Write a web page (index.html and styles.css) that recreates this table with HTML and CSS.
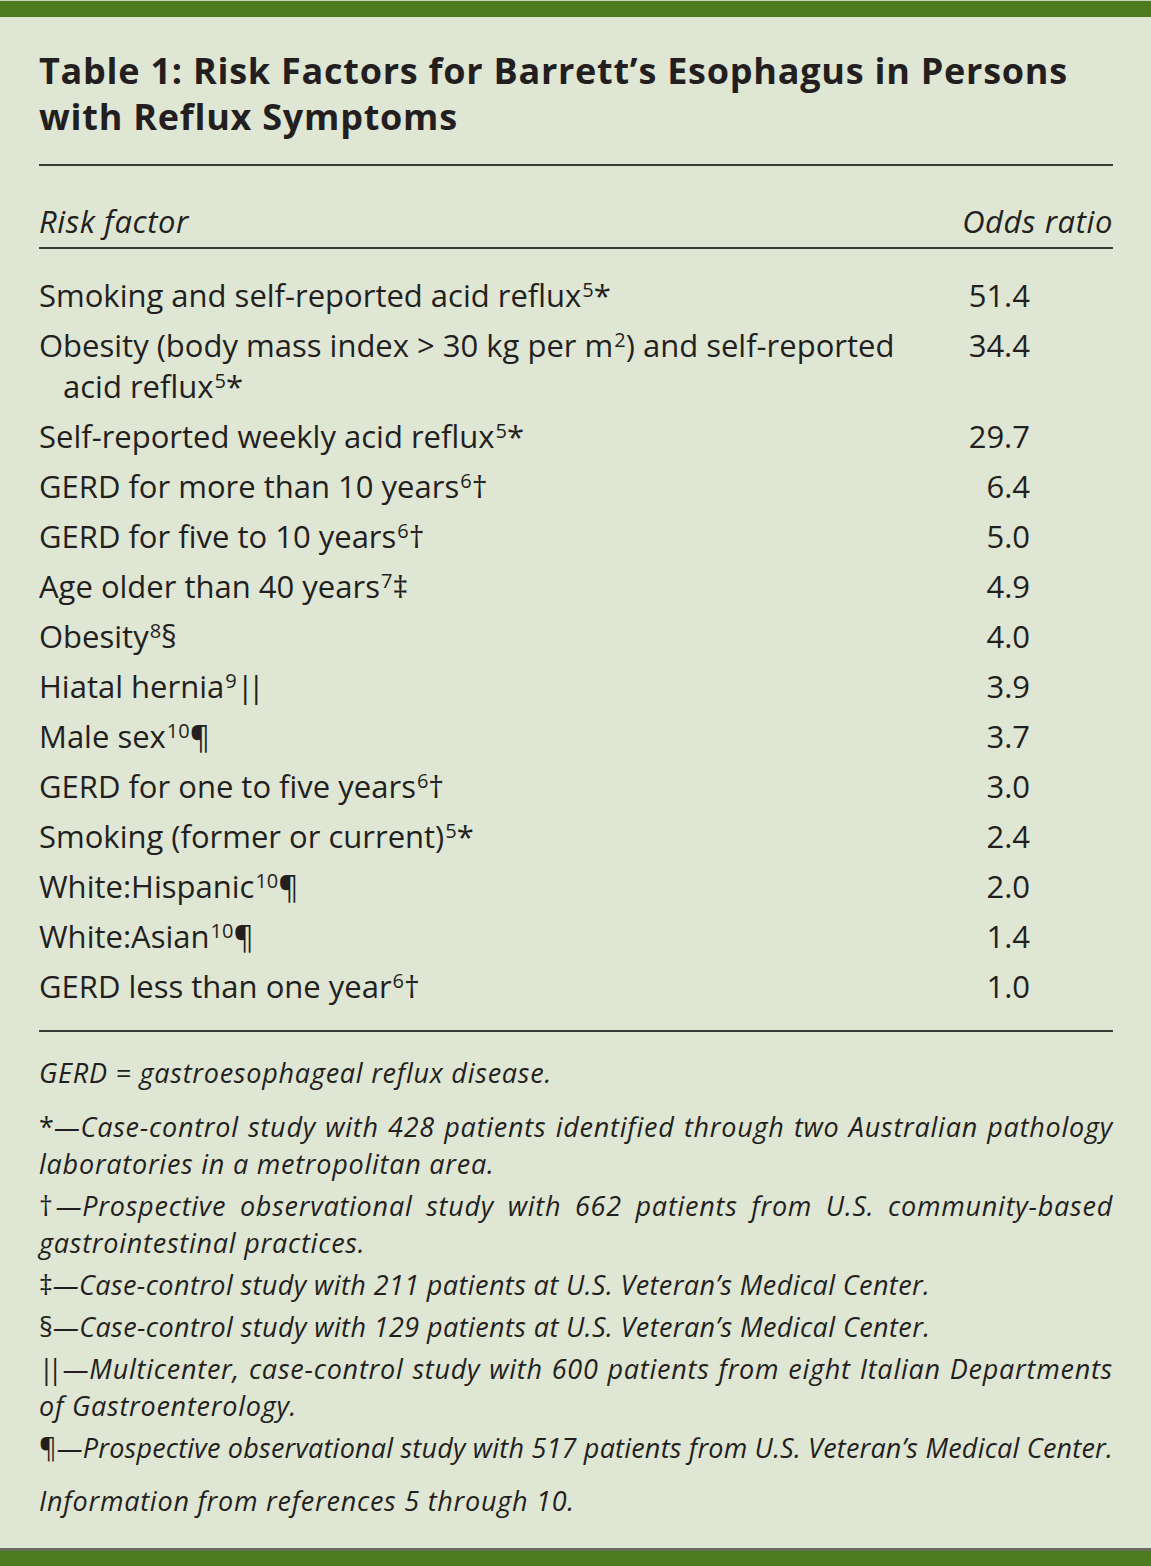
FILE: index.html
```html
<!DOCTYPE html>
<html lang="en">
<head>
<meta charset="utf-8">
<title>Table 1: Risk Factors for Barrett's Esophagus</title>
<link rel="stylesheet" href="styles.css">
</head>
<body>
<div class="bar-top"></div>
<main class="panel">
  <h1 class="title">Table 1: Risk Factors for Barrett’s Esophagus in Persons<br>with Reflux Symptoms</h1>
  <div class="table">
    <div class="head">
      <div class="c1">Risk factor</div>
      <div class="c2">Odds ratio</div>
    </div>
    <div class="body">
      <div class="row"><div class="c1">Smoking and self-reported acid reflux<sup>5</sup>*</div><div class="c2">51.4</div></div>
      <div class="row"><div class="c1">Obesity (body mass index &gt; 30 kg per m<sup>2</sup>) and self-reported<br>acid reflux<sup>5</sup>*</div><div class="c2">34.4</div></div>
      <div class="row"><div class="c1">Self-reported weekly acid reflux<sup>5</sup>*</div><div class="c2">29.7</div></div>
      <div class="row"><div class="c1">GERD for more than 10 years<sup>6</sup>†</div><div class="c2">6.4</div></div>
      <div class="row"><div class="c1">GERD for five to 10 years<sup>6</sup>†</div><div class="c2">5.0</div></div>
      <div class="row"><div class="c1">Age older than 40 years<sup>7</sup>‡</div><div class="c2">4.9</div></div>
      <div class="row"><div class="c1">Obesity<sup>8</sup>§</div><div class="c2">4.0</div></div>
      <div class="row"><div class="c1">Hiatal hernia<sup>9</sup><span class="dbar">||</span></div><div class="c2">3.9</div></div>
      <div class="row"><div class="c1">Male sex<sup>10</sup>¶</div><div class="c2">3.7</div></div>
      <div class="row"><div class="c1">GERD for one to five years<sup>6</sup>†</div><div class="c2">3.0</div></div>
      <div class="row"><div class="c1">Smoking (former or current)<sup>5</sup>*</div><div class="c2">2.4</div></div>
      <div class="row"><div class="c1">White:Hispanic<sup>10</sup>¶</div><div class="c2">2.0</div></div>
      <div class="row"><div class="c1">White:Asian<sup>10</sup>¶</div><div class="c2">1.4</div></div>
      <div class="row"><div class="c1">GERD less than one year<sup>6</sup>†</div><div class="c2">1.0</div></div>
    </div>
  </div>
  <div class="notes">
    <p class="note first">GERD = gastroesophageal reflux disease.</p>
    <div class="group">
      <p class="note"><span class="jl"><span class="up">*</span>—Case-control study with 428 patients identified through two Australian pathology</span>laboratories in a metropolitan area.</p>
      <p class="note"><span class="jl"><span class="up dag">†</span>—Prospective observational study with 662 patients from U.S. community-based</span>gastrointestinal practices.</p>
      <p class="note narrow"><span class="up">‡</span>—Case-control study with 211 patients at U.S. Veteran’s Medical Center.</p>
      <p class="note narrow"><span class="up">§</span>—Case-control study with 129 patients at U.S. Veteran’s Medical Center.</p>
      <p class="note"><span class="jl"><span class="up dbar">||</span>—Multicenter, case-control study with 600 patients from eight Italian Departments</span>of Gastroenterology.</p>
      <p class="note tight"><span class="up">¶</span>—Prospective observational study with 517 patients from U.S. Veteran’s Medical Center.</p>
    </div>
    <p class="note last">Information from references 5 through 10.</p>
  </div>
</main>
<div class="bar-bottom"></div>
</body>
</html>
```

FILE: styles.css
```css
html, body {
  margin: 0;
  padding: 0;
}
body {
  width: 1151px;
  min-height: 1566px;
  background: #dfe6d4;
  color: #231f20;
  font-family: "Open Sans", "Noto Sans", sans-serif;
  display: flex;
  flex-direction: column;
}
.bar-top {
  height: 17px;
  background: #4e7a1f;
  border-top: 1px solid #c9d3b8;
  box-sizing: border-box;
}
.bar-bottom {
  height: 18px;
  background: #4e7a1f;
  border-top: 3px solid #6b6c60;
  box-sizing: border-box;
  margin-top: auto;
}
.panel {
  padding: 31px 38px 0 39px;
  display: flex;
  flex-direction: column;
}
.title {
  margin: 0;
  font-size: 36px;
  line-height: 46px;
  font-weight: 700;
  letter-spacing: 0.75px;
  padding-bottom: 24px;
  border-bottom: 2px solid #3a3a36;
  white-space: nowrap;
}
.table {
  font-size: 31px;
}
.head {
  display: flex;
  justify-content: space-between;
  font-style: italic;
  font-size: 31px;
  letter-spacing: 0.6px;
  line-height: 40px;
  padding: 35px 0 6px;
  border-bottom: 2px solid #3a3a36;
}
.body {
  padding: 21px 0 19px;
  border-bottom: 2px solid #3a3a36;
}
.row {
  display: grid;
  grid-template-columns: 1fr 150px;
  line-height: 41px;
  padding: 4.5px 0;
}
.row .c1 {
  padding-left: 24px;
  text-indent: -24px;
}
.row .c2 {
  text-align: right;
  padding-right: 83px;
}
sup {
  font-size: 20px;
  line-height: 0;
  vertical-align: 0.5em;
  margin-left: 1px;
}
.dbar {
  letter-spacing: -6px;
  margin-right: 6px;
}
.notes {
  font-style: italic;
  font-size: 27px;
  letter-spacing: 0.75px;
  line-height: 37px;
  padding-top: 22px;
}
.note {
  margin: 0;
}
.note.first {
  margin-bottom: 17px;
}
.group {
  display: flex;
  flex-direction: column;
  gap: 5px;
}
.note.last {
  margin-top: 16px;
}
.note.narrow {
  letter-spacing: 0.4px;
}
.up {
  font-style: normal;
  letter-spacing: 0;
}
.up.dag {
  margin-right: -3px;
}
.up.dbar {
  letter-spacing: -6px;
  margin-right: 6px;
}
.jl {
  display: block;
  text-align: justify;
  text-align-last: justify;
}
.tight {
  white-space: nowrap;
  letter-spacing: 0.2px;
}
```
